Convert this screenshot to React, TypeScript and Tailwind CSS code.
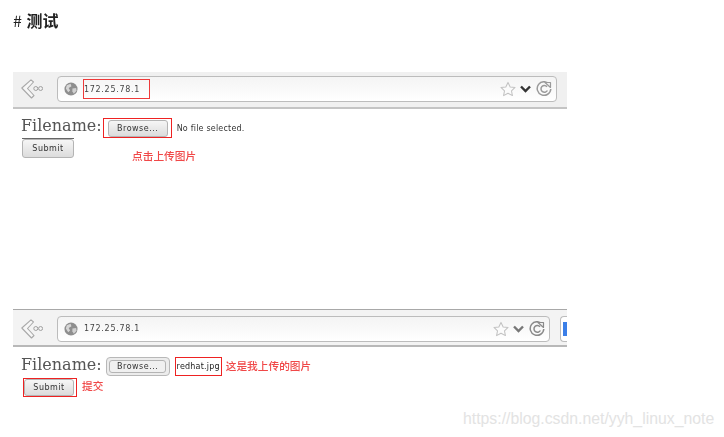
import React from "react";

const sans = "font-['DejaVu_Sans',sans-serif]";
const cjk = "font-['Noto_Sans_CJK_SC','Noto_Sans_CJK_TC',sans-serif]";

function BackIcon() {
  return (
    <svg width="22" height="20" viewBox="0 0 22 20" fill="none" className="shrink-0">
      <path d="M10 0.8 L0.8 9 L10.5 19 L13 16.5 L6.5 9.5 L12.5 3 Z" fill="#f6f6f6" stroke="#a8a8a8" strokeWidth="1.1" strokeLinejoin="round" />
      <circle cx="14.8" cy="9.5" r="2" stroke="#a0a0a0" strokeWidth="1" />
      <circle cx="19.6" cy="9.5" r="2" stroke="#a0a0a0" strokeWidth="1" />
    </svg>
  );
}

function Globe() {
  return (
    <svg width="14" height="14" viewBox="0 0 15 15" className="shrink-0">
      <circle cx="7.5" cy="7.5" r="7" fill="#8e8e8e" />
      <path d="M3 3.5 L7 2 L8 4.5 L5 6.5 L6.5 9 L4.5 11 L2 7 Z" fill="#d6d6d6" />
      <path d="M9 7 L13 6.5 L13.5 9.5 L10.5 12.5 L9 10 Z" fill="#d0d0d0" />
    </svg>
  );
}

function Star() {
  return (
    <svg width="16" height="16" viewBox="0 0 17 16" fill="#fbfbfb" stroke="#c2c2c2" strokeWidth="1.1" strokeLinejoin="round">
      <path d="M8.5 1 L10.8 5.8 L16 6.4 L12.2 10 L13.2 15 L8.5 12.5 L3.8 15 L4.8 10 L1 6.4 L6.2 5.8 Z" />
    </svg>
  );
}

function Chevron({ color }: { color: string }) {
  return (
    <svg width="11" height="8" viewBox="0 0 11 8" fill="none" stroke={color} strokeWidth="2.4">
      <path d="M1 1.5 L5.5 6 L10 1.5" />
    </svg>
  );
}

function Reload({ color }: { color: string }) {
  return (
    <svg width="16" height="16" viewBox="0 0 16 16" fill="none" stroke={color} strokeWidth="1.5">
      <path d="M13.5 3.5 A6.8 6.8 0 1 0 14.8 8" />
      <path d="M11 5.7 A3.4 3.4 0 1 0 11.4 9.5" />
      <path d="M9 1.5 H14.5 V6.5 Z" fill="#f2f2f2" strokeWidth="1.2" strokeLinejoin="round" />
    </svg>
  );
}

function Toolbar({ second }: { second?: boolean }) {
  const color = second ? "#8a8a8a" : "#9a9a9a";
  return (
    <div
      className={
        second
          ? "flex h-[38px] items-center border-t border-b-2 border-t-[#a8a8a8] border-b-[#b8b8b8] bg-[#f3f3f3] pl-[8px] pt-[2px]"
          : "flex h-[37px] items-center border-b-2 border-[#c4c4c4] bg-[#f0f0f0] pb-[1px] pl-[8px]"
      }
    >
      <BackIcon />
      <div
        className={`ml-[14px] flex h-[26px] items-center rounded-[4px] border border-[#bcbcbc] bg-gradient-to-b from-[#f4f4f4] to-white pl-[6px] pr-[4px] ${second ? "w-[494px]" : "w-[500px]"}`}
      >
        <Globe />
        <span className={`relative ml-[6px] pt-[1px] text-[8px] tracking-[0.7px] text-[#444] ${sans}`}>
          172.25.78.1
          {!second && (
            <>
              <span className="absolute left-[-1px] top-[-1px] h-[14px] w-[1px] bg-[#333]" />
              <span className="absolute left-[-1px] top-[-4px] h-[20px] w-[67px] border border-[#ee3a3a]" />
            </>
          )}
        </span>
        <div className="ml-auto flex items-center gap-[4px]">
          <Star />
          <Chevron color={second ? "#777" : "#333"} />
          <span className="ml-[1px]">
            <Reload color={color} />
          </span>
        </div>
      </div>
      {second && (
        <div className="ml-[10px] flex h-[26px] flex-1 items-center rounded-l-[4px] border border-r-0 border-[#bcbcbc] bg-white pl-[2px]">
          <div className="h-[14px] w-[4px] bg-[#3b7fe8]" />
        </div>
      )}
    </div>
  );
}

function Btn({ w, h, label, cls = "" }: { w: number; h: number; label: string; cls?: string }) {
  return (
    <div
      style={{ width: w, height: h }}
      className={`flex shrink-0 items-center justify-center rounded-[3px] border border-[#b4b4b4] bg-gradient-to-b from-[#f6f6f6] to-[#dcdcdc] pt-[1px] text-[8px] tracking-[0.5px] text-[#333] ${sans} ${cls}`}
    >
      {label}
    </div>
  );
}

function Filename({ cls }: { cls: string }) {
  return (
    <span className={`font-['DejaVu_Serif',serif] text-[16px] font-light leading-[20px] text-[#555] ${cls}`}>Filename:</span>
  );
}

export default function App() {
  return (
    <div className="relative h-[437px] w-[724px] overflow-hidden bg-white">
      <div className="blur-[0.35px]">
        <h1 className={`h-[72px] pl-[13px] pt-[10px] text-[16px] font-bold leading-[20px] text-[#222] ${cjk}`}>
          <span className="mr-[1px] font-normal"># </span>测试
        </h1>

        <section className="ml-[13px] w-[554px]">
          <Toolbar />
          <div className="flex h-[29px] items-center pl-[8px] pt-[9px]">
            <Filename cls="mb-[5px]" />
            <div className="ml-[1px] flex h-[20px] w-[69px] items-center border border-[#ee2222] pl-[4px]">
              <Btn w={60} h={17} label="Browse..." />
            </div>
            <span className={`ml-[5px] pt-[1px] text-[8px] tracking-[0.2px] text-[#333] ${sans}`}>No file selected.</span>
          </div>
          <div className="flex items-start pl-[9px]">
            <div className="border-t border-[#666]">
              <Btn w={52} h={19} label="Submit" cls="text-[#222]" />
            </div>
            <span className={`ml-[58px] mt-[11px] text-[10.7px] font-medium leading-[14px] text-[#f04848] ${cjk}`}>点击上传图片</span>
          </div>
        </section>

        <section className="ml-[13px] mt-[146px] w-[554px]">
          <Toolbar second />
          <div className="flex h-[29px] items-center pl-[8px] pt-[10px]">
            <Filename cls="mb-[3px]" />
            <div className="ml-[4px] flex h-[19px] w-[64px] shrink-0 items-center justify-center rounded-[4px] border border-[#b8b8b8] bg-[#ececec]">
              <Btn w={57} h={13} label="Browse..." cls="rounded-[2px] bg-none bg-[#f0f0f0]" />
            </div>
            <span className={`ml-[5px] flex h-[19px] w-[47px] shrink-0 items-center justify-center border border-[#ee2222] pt-[1px] text-[8px] tracking-[0.2px] text-[#222] ${sans}`}>redhat.jpg</span>
            <span className={`ml-[4px] text-[10.7px] font-medium text-[#f04848] ${cjk}`}>这是我上传的图片</span>
          </div>
          <div className="mt-[2px] flex items-center pl-[10px]">
            <div className="flex h-[19px] w-[54px] items-center border border-[#ee2222]">
              <Btn w={50} h={17} label="Submit" cls="rounded-[2px] text-[#222]" />
            </div>
            <span className={`mb-[4px] ml-[5px] text-[10.7px] font-medium leading-[14px] text-[#f04848] ${cjk}`}>提交</span>
          </div>
        </section>
      </div>

      <span className="absolute left-[463px] top-[409px] font-['Liberation_Sans',sans-serif] text-[15.8px] leading-[20px] text-[#e3e3e3]">
        https://blog.csdn.net/yyh_linux_note
      </span>
    </div>
  );
}
